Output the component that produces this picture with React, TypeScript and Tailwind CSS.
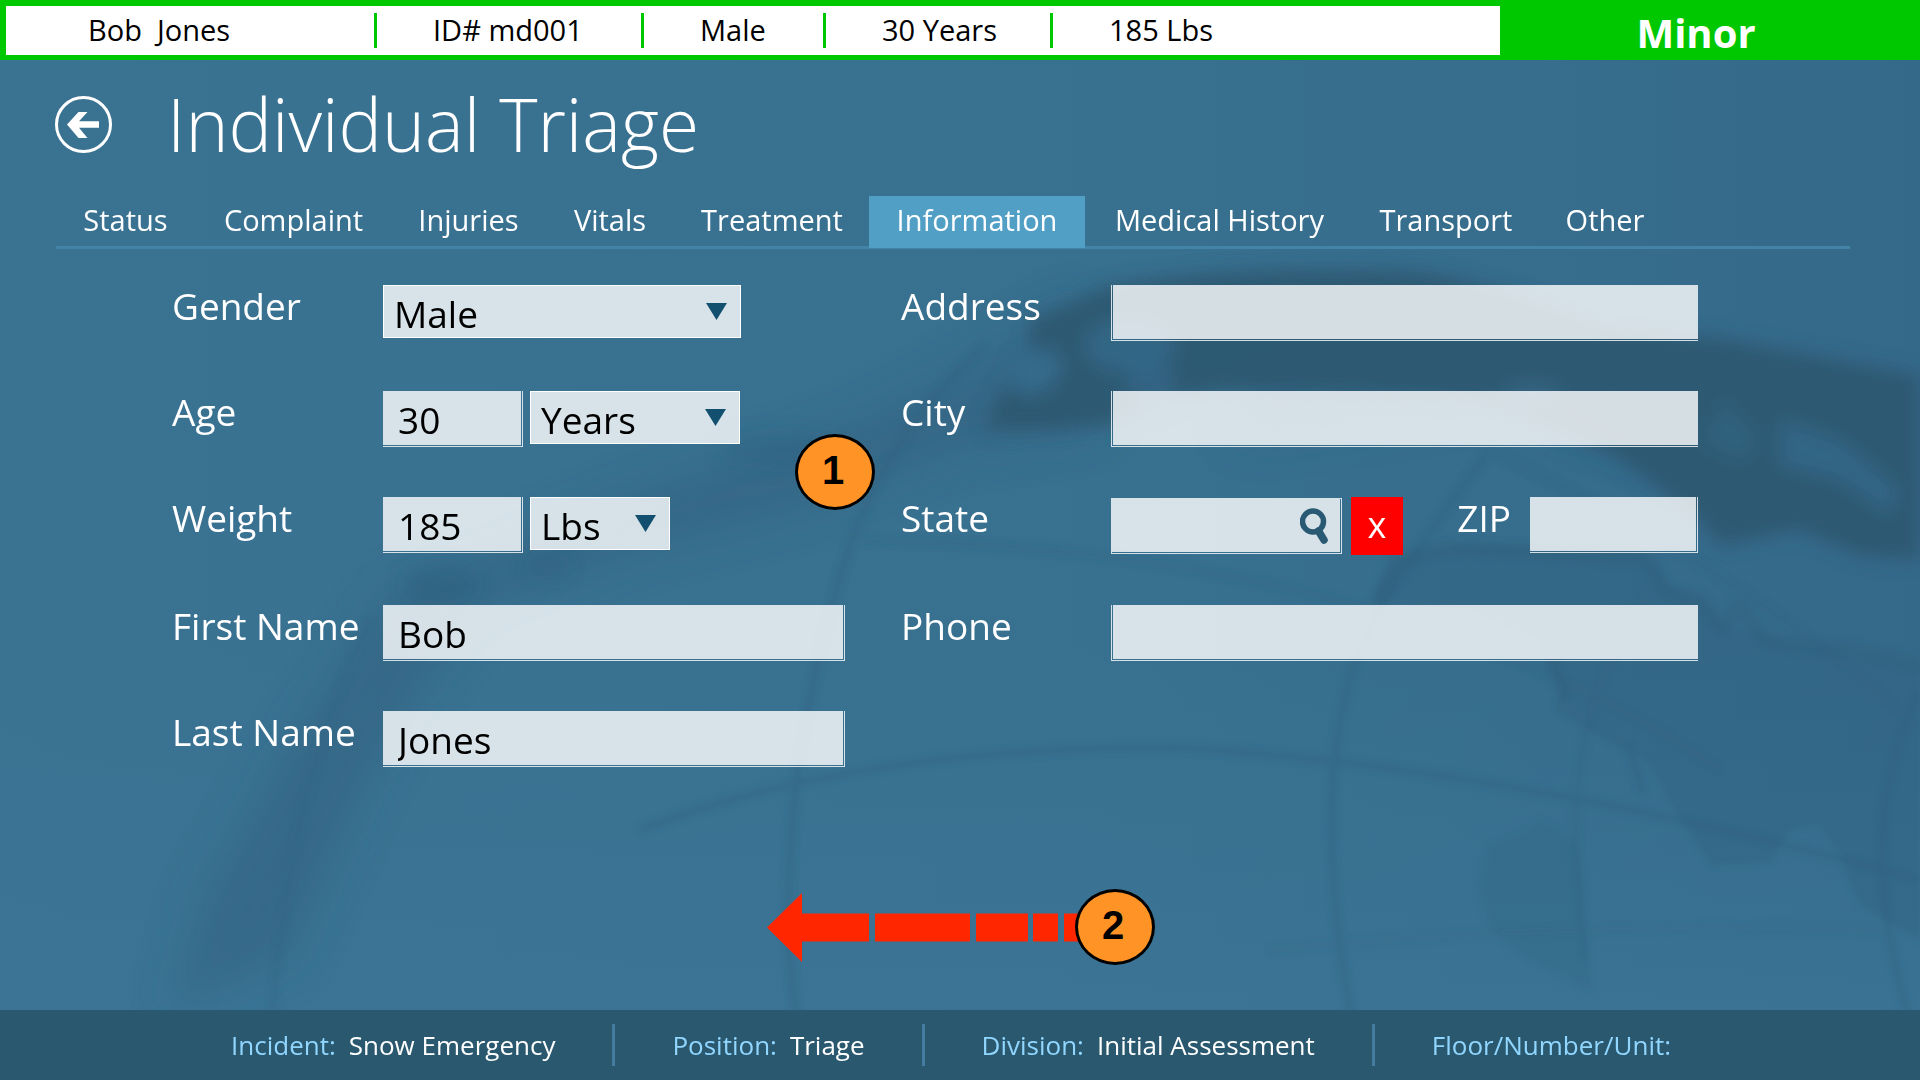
import type { ReactNode } from "react";

const patient = [
  { text: "Bob\u00a0 Jones", box: "w-[371px] pl-[82px]" },
  { text: "ID# md001", box: "w-[267px] pl-[56px]" },
  { text: "Male", box: "w-[182px] pl-[56px]" },
  { text: "30 Years", box: "w-[227px] pl-[56px]" },
  { text: "185 Lbs", box: "pl-[56px]" },
];

const tabs = [
  { name: "Status", width: "w-[139px]" },
  { name: "Complaint", width: "w-[197px]" },
  { name: "Injuries", width: "w-[153px]" },
  { name: "Vitals", width: "w-[130px]" },
  { name: "Treatment", width: "w-[194px]" },
  { name: "Information", width: "w-[216px]" },
  { name: "Medical History", width: "w-[269px]" },
  { name: "Transport", width: "w-[184px]" },
  { name: "Other", width: "w-[134px]" },
];

const details = [
  { label: "Incident:", value: "Snow Emergency" },
  { label: "Position:", value: "Triage" },
  { label: "Division:", value: "Initial Assessment" },
  { label: "Floor/Number/Unit:", value: "" },
];

function Globe() {
  return (
    <svg
      aria-hidden="true"
      className="absolute inset-0 h-full w-full"
      viewBox="0 0 1920 1080"
      preserveAspectRatio="none"
    >
      <defs>
        <linearGradient id="sea" x1="0" y1="0" x2="1" y2="0">
          <stop offset="0" stopColor="#3a7292" />
          <stop offset="0.6" stopColor="#38708f" />
          <stop offset="1" stopColor="#35698a" />
        </linearGradient>
        <linearGradient id="glow" x1="0" y1="0" x2="0" y2="1">
          <stop offset="0.6" stopColor="#3b7496" stopOpacity="0" />
          <stop offset="1" stopColor="#3b7496" />
        </linearGradient>
        <filter id="wide" x="-20%" y="-20%" width="140%" height="140%">
          <feGaussianBlur stdDeviation="20" />
        </filter>
        <filter id="soft" x="-20%" y="-20%" width="140%" height="140%">
          <feGaussianBlur stdDeviation="9" />
        </filter>
        <filter id="fine" x="-20%" y="-20%" width="140%" height="140%">
          <feGaussianBlur stdDeviation="3" />
        </filter>
      </defs>
      <rect width="1920" height="1080" fill="url(#sea)" />
      <rect width="1920" height="1080" fill="url(#glow)" />
      <g filter="url(#wide)" fill="#2f6080">
        <path d="M1080 300 L960 370 L840 430 L640 490 L470 560 L390 590 L280 760 L200 900 L170 1010 L290 960 L360 800 L420 690 L480 610 L640 550 L800 510 L960 450 L1100 430Z" opacity="0.5" />
        <path d="M1240 440 L1500 400 L1650 450 L1650 380 L1240 370Z" opacity="0.6" />
      </g>
      <g filter="url(#soft)">
        <path
          d="M1110 285 Q1240 264 1420 272 Q1520 290 1600 325 L1720 338 L1850 362 L1920 375 V560 L1860 556 L1800 530 L1720 546 L1698 520 L1660 490 L1620 460 L1560 430 L1480 400 L1360 392 L1230 390 L1170 400 L1110 425 L1050 430 L985 430 L1000 390 L1030 370 L1030 320Z"
          fill="#2b5870"
          opacity="0.9"
        />
        <ellipse cx="1130" cy="345" rx="46" ry="28" fill="#35698a" opacity="0.8" />
        <ellipse cx="1150" cy="385" rx="24" ry="26" fill="#35698a" opacity="0.7" />
        <ellipse cx="1036" cy="372" rx="28" ry="20" fill="#366b8a" transform="rotate(-35 1036 372)" />
        <ellipse cx="1532" cy="394" rx="32" ry="10" fill="#346684" />
        <path d="M1780 420 L1840 440 L1900 490 L1890 515 L1840 480 L1780 465Z" fill="#35688a" opacity="0.8" />
        <path d="M1700 440 L1725 400 L1760 440 L1740 462Z" fill="#346784" opacity="0.6" />
        <ellipse cx="440" cy="586" rx="36" ry="20" fill="#2d5f7e" opacity="0.5" />
        <ellipse cx="548" cy="566" rx="20" ry="9" fill="#2d5f7e" opacity="0.45" />
        <ellipse cx="780" cy="450" rx="60" ry="16" fill="#2d5f7e" opacity="0.35" />
      </g>
      <g filter="url(#fine)">
        <path
          d="M1372 602 L1392 562 L1460 545 L1640 550 L1668 584 L1700 600 L1722 625 L1760 632 L1790 645 L1850 655 L1920 668 V940 L1860 905 L1840 855 L1818 824 L1790 830 L1770 862 L1712 866 L1680 820 L1650 765 L1620 740 L1560 700 L1545 665 L1540 640 L1470 610Z"
          fill="#336381"
          opacity="0.5"
        />
        <path
          d="M1478 890 L1488 845 L1520 835 L1540 820 L1575 840 L1582 870 L1584 920 L1592 990 L1530 960 L1490 930Z"
          fill="#336583"
          opacity="0.28"
        />
        <g fill="none" stroke="#2f5f7b" strokeWidth="8" strokeLinejoin="round" strokeLinecap="round" opacity="0.4">
          <path d="M1378 600 L1396 562 L1440 548 L1510 550 L1600 556 L1650 560 L1664 592 L1700 600 L1722 628 L1738 606 L1766 640 L1800 645 L1850 650 L1920 664" strokeWidth="15" />
          <path d="M1550 655 L1566 690 L1560 708 L1630 750 L1642 790" />
        </g>
        <g fill="none" stroke="#2f5f7d" strokeWidth="7" opacity="0.4">
          <path d="M985 345 Q880 440 842 570 Q785 760 788 940 L796 1020" />
          <path d="M1490 450 Q1390 580 1355 660 Q1310 800 1352 1020" />
          <path d="M640 830 Q860 745 1180 748 Q1500 765 1920 880" />
          <path d="M860 540 Q1400 550 1720 770" opacity="0.5" />
          <path d="M1490 450 Q1760 580 1920 730" opacity="0.6" />
          <path d="M1650 590 Q1570 700 1576 860 L1586 960" opacity="0.6" />
          <path d="M1920 690 Q1850 830 1910 1020" />
          <path d="M1270 950 Q1560 920 1880 930" opacity="0.35" />
          <path d="M370 620 Q290 780 272 1020" opacity="0.6" />
        </g>
      </g>
    </svg>
  );
}

function Label({ htmlFor, children }: { htmlFor: string; children: ReactNode }) {
  return (
    <label htmlFor={htmlFor} className="self-start text-[37px] leading-[41px] whitespace-nowrap text-white">
      {children}
    </label>
  );
}

/* Text box with a translucent fill set one pixel inside a thin frame. */
function Field({
  id,
  value,
  width,
  frame = "border-r border-b pr-px pb-px",
  children,
}: {
  id: string;
  value?: string;
  width: string;
  frame?: string;
  children?: ReactNode;
}) {
  return (
    <div className={`relative h-14 border-white/80 ${frame} ${width}`}>
      <input
        id={id}
        type="text"
        defaultValue={value}
        className="block h-full w-full bg-white/80 pt-0.5 pr-3 pl-[15px] text-[37px] text-black outline-none"
      />
      {children}
    </div>
  );
}

function Picker({ id, options, width, label }: { id: string; options: string[]; width: string; label?: string }) {
  return (
    <div className={`relative h-[53px] ${width}`}>
      <select
        id={id}
        aria-label={label}
        className="block h-full w-full appearance-none border border-white bg-white/80 bg-clip-padding pb-0.5 pl-2.5 text-[37px] text-black outline-none"
      >
        {options.map((o) => (
          <option key={o}>{o}</option>
        ))}
      </select>
      <svg aria-hidden="true" className="pointer-events-none absolute top-[18px] right-[14px]" width="21" height="17" viewBox="0 0 21 17">
        <path d="M0 0H21L10.500 17Z" fill="#13506f" />
      </svg>
    </div>
  );
}

function Marker({ n, place }: { n: number; place: string }) {
  return (
    <div
      className={`absolute flex h-[76px] w-20 items-center justify-center rounded-[50%] border-3 border-black bg-[#ff9326] pr-1 pb-1 font-['Liberation_Sans',Arial,sans-serif] text-[40px] leading-none font-bold text-black ${place}`}
    >
      {n}
    </div>
  );
}

export default function App() {
  return (
    <div className="relative isolate flex min-h-screen flex-col overflow-hidden bg-[#38708f] font-['Open_Sans','Segoe_UI',sans-serif]">
      <div className="absolute inset-0 -z-10">
        <Globe />
      </div>

      <header className="flex h-[60px] bg-[#00c800] pt-[6px] pb-[5px] pl-[6px]">
        <div className="flex flex-1 items-center bg-white text-[29px] leading-none whitespace-nowrap text-black">
          {patient.map((p, i) => (
            <div
              key={p.text}
              className={`flex h-[35px] items-center pb-0.5 ${i < patient.length - 1 ? "border-r-3 border-[#00c800]" : ""} ${p.box}`}
            >
              {p.text}
            </div>
          ))}
        </div>
        <div className="flex w-[420px] items-center justify-center pt-1 pr-7 text-[40px] leading-none font-bold text-white">
          Minor
        </div>
      </header>

      <div className="flex h-[136px] items-center px-[55px] pb-[7px]">
        <button type="button" aria-label="Back" className="h-[58px] w-[58px] shrink-0">
          <svg width="58" height="58" viewBox="0 0 58 58">
            <circle cx="28.500" cy="28.500" r="27" fill="none" stroke="#fff" strokeWidth="3" />
            <path d="M12 28.500L23.500 16H32.500L24 25.300H44V31.700H24L32.500 42H23.500Z" fill="#fff" />
          </svg>
        </button>
        <h1 className="ml-[54px] pb-0.5 text-[73px] leading-none font-light text-white">Individual Triage</h1>
      </div>

      <nav className="relative mr-[70px] ml-14 flex" role="tablist">
        <div className="absolute right-0 bottom-[-1px] left-0 h-[3px] bg-[#4283a7]" />
        {tabs.map((t) => (
          <button
            key={t.name}
            type="button"
            role="tab"
            aria-selected={t.name === "Information"}
            className={`relative h-[52px] pb-[5px] text-center text-[29px] leading-none whitespace-nowrap text-white ${t.width} ${t.name === "Information" ? "bg-[#529fc6]" : ""}`}
          >
            {t.name}
          </button>
        ))}
      </nav>

      <main className="relative flex-1">
        <form className="mt-[37px] mr-[222px] ml-[172px] grid grid-cols-[211fr_518fr_210fr_587fr] gap-y-[50px]">
          <Label htmlFor="gender">Gender</Label>
          <div className="flex pr-14">
            <Picker id="gender" options={["Male", "Female"]} width="w-[358px]" />
          </div>
          <Label htmlFor="address">Address</Label>
          <Field id="address" width="w-full" frame="border-l border-b pl-px pb-px" />

          <Label htmlFor="age">Age</Label>
          <div className="flex gap-[7px] pr-14">
            <Field id="age" value="30" width="w-[140px]" />
            <Picker id="age-unit" label="Age unit" options={["Years", "Months"]} width="w-[210px]" />
          </div>
          <Label htmlFor="city">City</Label>
          <Field id="city" width="w-full" frame="border-l border-b pl-px pb-px" />

          <Label htmlFor="weight">Weight</Label>
          <div className="flex gap-[7px] pr-14">
            <Field id="weight" value="185" width="w-[140px]" />
            <Picker id="weight-unit" label="Weight unit" options={["Lbs", "Kg"]} width="w-[140px]" />
          </div>
          <Label htmlFor="state">State</Label>
          <div className="flex items-start">
            <Field id="state" width="w-[231px]" frame="mt-px border border-white/60 pr-px pb-px">
              <svg aria-hidden="true" className="absolute top-[9px] right-[13px]" width="28" height="36" viewBox="0 0 28 36">
                <circle cx="13" cy="13.500" r="10.500" fill="none" stroke="#2a5a73" strokeWidth="5.500" />
                <path d="M18.500 23L24 32" stroke="#2a5a73" strokeWidth="7.500" strokeLinecap="round" />
              </svg>
            </Field>
            <button
              type="button"
              aria-label="Clear state"
              className="ml-[9px] h-[58px] w-[52px] bg-[#ff0000] pb-0.5 text-[36px] leading-none text-white"
            >
              x
            </button>
            <div className="ml-auto flex gap-[19px]">
              <Label htmlFor="zip">ZIP</Label>
              <Field id="zip" width="w-[168px]" />
            </div>
          </div>

          <Label htmlFor="first-name">First Name</Label>
          <div className="pr-14">
            <Field id="first-name" value="Bob" width="w-full" />
          </div>
          <Label htmlFor="phone">Phone</Label>
          <Field id="phone" width="w-full" frame="border-l border-b pl-px pb-px" />

          <Label htmlFor="last-name">Last Name</Label>
          <div className="pr-14">
            <Field id="last-name" value="Jones" width="w-full" />
          </div>
        </form>

        <Marker n={1} place="top-[186px] left-[795px]" />
        <svg aria-hidden="true" className="absolute top-[645px] left-[767px]" width="320" height="69" viewBox="0 0 320 69">
          <path
            d="M0 34.500L35 0V20.500H102V48.500H35V69ZM108 20.500H203V48.500H108ZM209 20.500H261V48.500H209ZM266 20.500H291V48.500H266ZM297 20.500H318V48.500H297Z"
            fill="#ff2600"
          />
        </svg>
        <Marker n={2} place="top-[641px] left-[1075px]" />
      </main>

      <footer className="flex h-[70px] items-center bg-[#2a586f] pl-[174px] text-[26px] leading-none whitespace-nowrap">
        {details.map((d, i) => (
          <div
            key={d.label}
            className={`flex h-[42px] items-center gap-[13px] px-[57px] ${i > 0 ? "border-l-3 border-[#447d9f]" : ""}`}
          >
            <span className="text-[#90d6ff]">{d.label}</span>
            {d.value && <span className="text-white">{d.value}</span>}
          </div>
        ))}
      </footer>
    </div>
  );
}
